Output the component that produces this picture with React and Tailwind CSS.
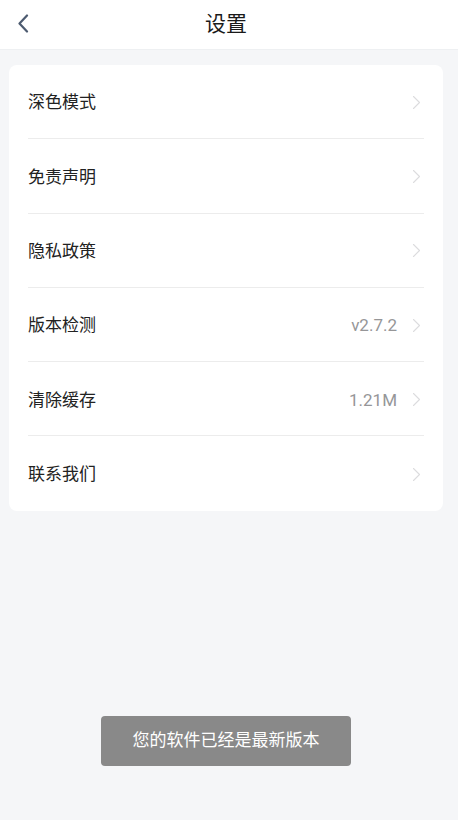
import { useState } from "react";

const rows = [
  { label: "深色模式" },
  { label: "免责声明" },
  { label: "隐私政策" },
  { label: "版本检测", value: "v2.7.2" },
  { label: "清除缓存", value: "1.21M" },
  { label: "联系我们" },
];

const font = "font-['Roboto','Noto_Sans_CJK_SC',sans-serif]";

function Chevron() {
  return (
    <svg width="9" height="15" viewBox="0 0 9 15" fill="none" className="ml-[15px] -mt-[2px] shrink-0">
      <path d="M1.5 1.5 L7.5 7.5 L1.5 13.5" stroke="#dcdcde" strokeWidth="1.1" strokeLinecap="round" strokeLinejoin="round" />
    </svg>
  );
}

export default function App() {
  const [toast] = useState("您的软件已经是最新版本");

  return (
    <div className={`${font} relative flex h-[820px] w-[458px] flex-col bg-[#f5f6f8]`}>
      <header className="relative flex h-[50px] shrink-0 items-center justify-center border-b border-[#eef0f2] bg-white">
        <button className="absolute left-[16px] top-[13px] flex h-[20px] w-[14px] items-center justify-center">
          <svg width="12" height="19" viewBox="0 0 12 19" fill="none">
            <path d="M10 1.5 L2.5 9.5 L10 17.5" stroke="#4d5b70" strokeWidth="2.2" strokeLinecap="round" strokeLinejoin="round" />
          </svg>
        </button>
        <h1 className="-ml-[6px] text-[21px] font-normal text-[#1a1a1a]">设置</h1>
      </header>

      <div className="ml-[9px] mr-[15px] mt-[15px] rounded-[8px] bg-white">
        {rows.map((row, i) => (
          <div key={row.label} className="pl-[19px] pr-[19px]">
            <div
              className={`flex h-[74.3px] items-center justify-between pt-[3px] ${
                i < rows.length - 1 ? "border-b border-[#ececec]" : ""
              }`}
            >
              <span className="text-[17px] text-[#222]">{row.label}</span>
              <div className="flex items-center pr-[3px]">
                {row.value ? <span className="text-[17px] text-[#969698]">{row.value}</span> : null}
                <Chevron />
              </div>
            </div>
          </div>
        ))}
      </div>

      {toast ? (
        <div className="absolute left-[101px] top-[716px] flex h-[50px] w-[250px] items-center justify-center rounded-[4px] bg-[#898989]">
          <span className="text-[17px] text-white">{toast}</span>
        </div>
      ) : null}
    </div>
  );
}
